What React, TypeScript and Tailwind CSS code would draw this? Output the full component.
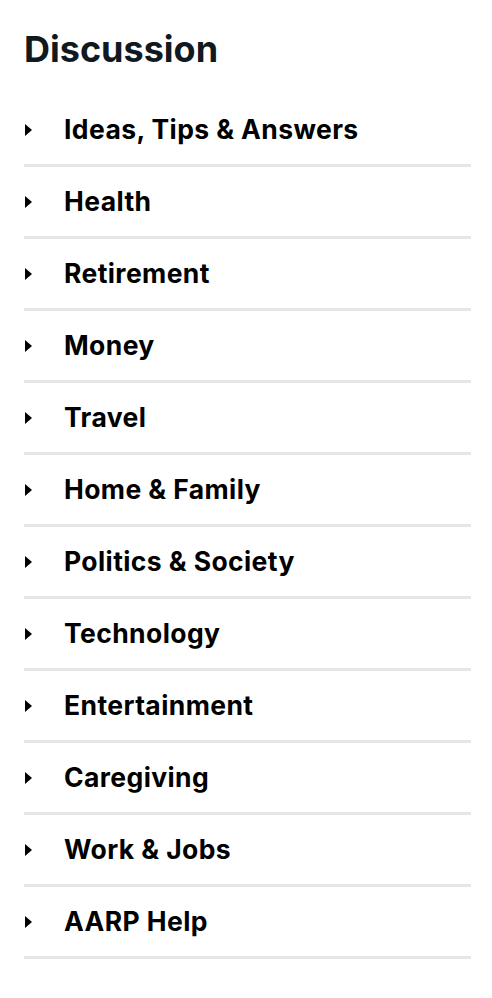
import React from "react";

const items = [
  "Ideas, Tips & Answers",
  "Health",
  "Retirement",
  "Money",
  "Travel",
  "Home & Family",
  "Politics & Society",
  "Technology",
  "Entertainment",
  "Caregiving",
  "Work & Jobs",
  "AARP Help",
];

export default function App() {
  return (
    <div
      className="bg-white min-h-[998px] pl-6 pr-[21px] pt-[25px] text-[#111]"
      style={{ fontFamily: "Inter, 'Open Sans', sans-serif" }}
    >
      <h2 className="text-[36px] font-bold leading-[48px] text-[#101820]">Discussion</h2>
      <ul className="mt-[22px]">
        {items.map((t) => (
          <li
            key={t}
            className="flex items-center h-[72px] border-b-[3px] border-[#e6e6e6]"
          >
            <span className="w-0 h-0 border-l-[7px] border-l-black border-y-[6px] border-y-transparent ml-[1px]" />
            <span className="ml-[32px] text-[26.5px] tracking-[0.4px] font-bold text-black">{t}</span>
          </li>
        ))}
      </ul>
    </div>
  );
}
